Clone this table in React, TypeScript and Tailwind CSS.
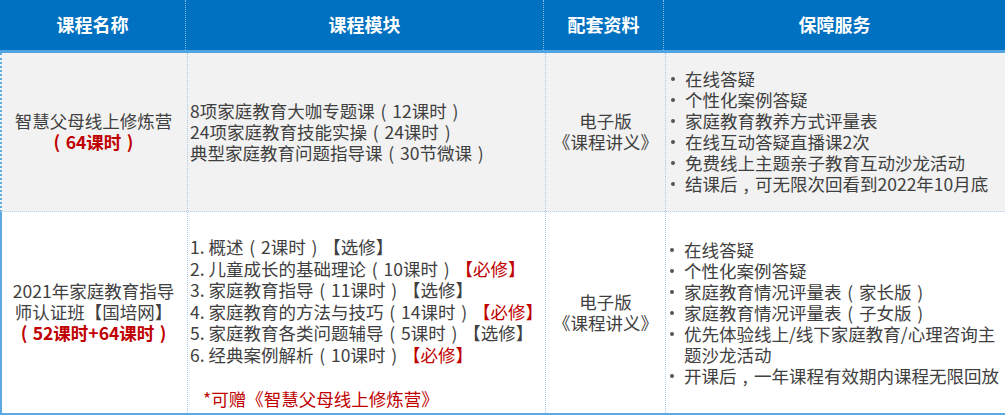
import React from "react";

const font = { fontFamily: '"Noto Sans CJK SC", "Noto Sans", sans-serif' };

const MAP: Record<string, string> = { "（": "(", "）": ")", "，": "," };

function T({ s }: { s: string }) {
  const parts = s.split(/([（），])/);
  return (
    <>
      {parts.map((p, i) =>
        MAP[p] ? (
          <span key={i} className="inline-block w-[1em] text-center">
            {MAP[p]}
          </span>
        ) : (
          <React.Fragment key={i}>{p}</React.Fragment>
        )
      )}
    </>
  );
}

function Bullets({ items }: { items: string[] }) {
  return (
    <ul className="flex flex-col">
      {items.map((t, i) => (
        <li key={i} className="flex">
          <span className="w-[16px] shrink-0 flex pt-[9px] pl-[2px]">
            <span className="block w-[4px] h-[4px] rounded-full bg-[#555555]" />
          </span>
          <span>
            <T s={t} />
          </span>
        </li>
      ))}
    </ul>
  );
}

export default function App() {
  return (
    <div
      className="w-[1005px] h-[415px] bg-white text-[#404040] text-[17.5px] leading-[21px] overflow-hidden"
      style={font}
    >
      {/* Header */}
      <div className="grid grid-cols-[185px_358px_120px_342px] h-[53px] bg-[#0070c0] border-b-[3px] border-[#4fa6e3] text-white font-bold text-[18px]">
        <div className="flex items-center justify-center pb-[2px]">课程名称</div>
        <div className="flex items-center justify-center pb-[2px] border-l border-dotted border-[#7fb9e6]">课程模块</div>
        <div className="flex items-center justify-center pb-[2px] border-l border-dotted border-[#7fb9e6]">配套资料</div>
        <div className="flex items-center justify-center pb-[2px] border-l border-dotted border-[#7fb9e6]">保障服务</div>
      </div>

      {/* Row 1 */}
      <div className="grid grid-cols-[185px_358px_120px_342px] h-[159px] bg-[#f2f2f2] border-l-2 border-[#5aa9e2] border-b border-b-[#b7d3ec] border-dotted">
        <div className="flex flex-col items-center justify-center text-center -ml-[2px] pb-[2px]">
          <div>智慧父母线上修炼营</div>
          <div className="text-[#c00000] font-bold">
            <T s="（64课时）" />
          </div>
        </div>
        <div className="flex flex-col justify-center pl-[2px] pb-[1px] border-l border-dotted border-[#a9c9e8]">
          <div><T s="8项家庭教育大咖专题课（12课时）" /></div>
          <div><T s="24项家庭教育技能实操（24课时）" /></div>
          <div><T s="典型家庭教育问题指导课（30节微课）" /></div>
        </div>
        <div className="flex flex-col items-center justify-center text-center pb-[3px] border-l border-dotted border-[#a9c9e8]">
          <div>电子版</div>
          <div>《课程讲义》</div>
        </div>
        <div className="flex flex-col justify-center pl-[3px] pb-[2px] border-l border-dotted border-[#a9c9e8]">
          <Bullets
            items={[
              "在线答疑",
              "个性化案例答疑",
              "家庭教育教养方式评量表",
              "在线互动答疑直播课2次",
              "免费线上主题亲子教育互动沙龙活动",
              "结课后，可无限次回看到2022年10月底",
            ]}
          />
        </div>
      </div>

      {/* Row 2 */}
      <div className="grid grid-cols-[185px_358px_120px_342px] h-[203px] bg-white border-l-2 border-[#5aa9e2] border-b-2 border-b-[#5aa9e2]">
        <div className="flex flex-col items-center justify-center text-center -ml-[2px] pb-[2px]">
          <div>2021年家庭教育指导</div>
          <div>师认证班【国培网】</div>
          <div className="text-[#c00000] font-bold">
            <T s="（52课时+64课时）" />
          </div>
        </div>
        <div className="flex flex-col pl-[2px] pt-[24px] border-l border-dotted border-[#a9c9e8] leading-[21.6px] whitespace-nowrap">
          <div><T s="1. 概述（2课时）" />【选修】</div>
          <div>
            <T s="2. 儿童成长的基础理论（10课时）" />
            <span className="text-[#c00000]">【必修】</span>
          </div>
          <div><T s="3. 家庭教育指导（11课时）" />【选修】</div>
          <div>
            <T s="4. 家庭教育的方法与技巧（14课时）" />
            <span className="text-[#c00000]">【必修】</span>
          </div>
          <div><T s="5. 家庭教育各类问题辅导（5课时）" />【选修】</div>
          <div>
            <T s="6. 经典案例解析（10课时）" />
            <span className="text-[#c00000]">【必修】</span>
          </div>
          <div className="mt-[22px] pl-[13px] text-[#c00000]">*可赠《智慧父母线上修炼营》</div>
        </div>
        <div className="flex flex-col items-center justify-center text-center pb-[1px] border-l border-dotted border-[#a9c9e8]">
          <div>电子版</div>
          <div>《课程讲义》</div>
        </div>
        <div className="flex flex-col justify-center pl-[2px] pb-[1px] border-l border-dotted border-[#a9c9e8]">
          <Bullets
            items={[
              "在线答疑",
              "个性化案例答疑",
              "家庭教育情况评量表（家长版）",
              "家庭教育情况评量表（子女版）",
              "优先体验线上/线下家庭教育/心理咨询主题沙龙活动",
              "开课后，一年课程有效期内课程无限回放",
            ]}
          />
        </div>
      </div>
    </div>
  );
}
